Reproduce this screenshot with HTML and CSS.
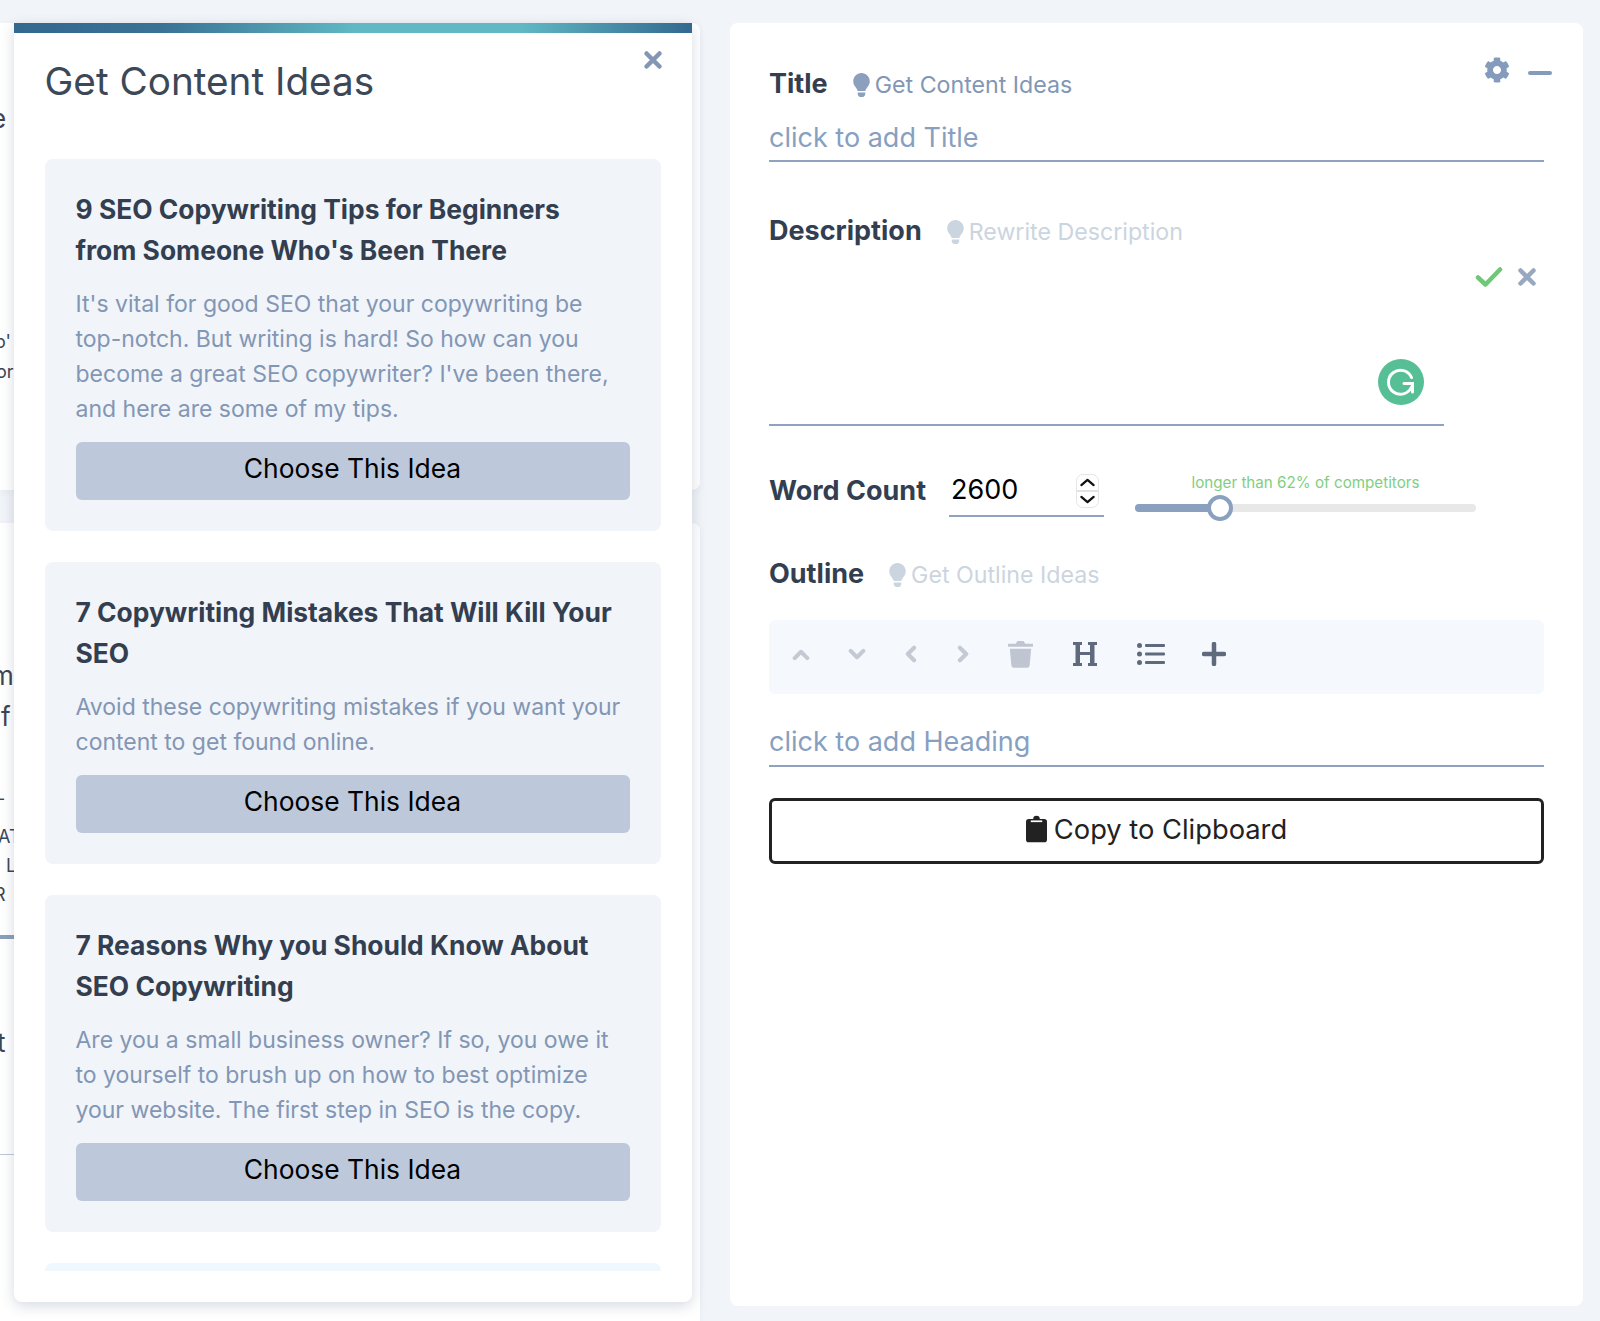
FILE: index.html
```html
<!DOCTYPE html>
<html lang="en">
<head>
<meta charset="utf-8">
<title>Get Content Ideas</title>
<link rel="stylesheet" href="styles.css">
</head>
<body>
<div class="page">
  <div class="backdrop">
    <div class="back-panel back-top">
      <div class="frag f1">e</div>
      <div class="frag f2">o'</div>
      <div class="frag f3">or</div>
    </div>
    <div class="back-panel back-bottom">
      <div class="frag f4">m</div>
      <div class="frag f5">f</div>
      <div class="frag f6 small">-</div>
      <div class="frag f7 small">AT</div>
      <div class="frag f8 small">&nbsp;L</div>
      <div class="frag f9 small">R</div>
      <div class="back-bar"></div>
      <div class="frag f10">t</div>
      <div class="back-rule"></div>
    </div>
  </div>

  <section class="modal">
    <div class="modal-bar"></div>
    <button class="modal-close" aria-label="Close">
      <svg viewBox="0 0 20 20" class="x-icon"><path d="M3.5 3.5l13 13M16.500 3.500l-13 13"/></svg>
    </button>
    <h1 class="modal-title">Get Content Ideas</h1>
    <div class="idea-list">
      <article class="idea">
        <h2 class="idea-title">9 SEO Copywriting Tips for Beginners from Someone Who's Been There</h2>
        <p class="idea-text">It's vital for good SEO that your copywriting be top-notch. But writing is hard! So how can you become a great SEO copywriter? I've been there, and here are some of my tips.</p>
        <button class="idea-btn">Choose This Idea</button>
      </article>
      <article class="idea">
        <h2 class="idea-title">7 Copywriting Mistakes That Will Kill Your SEO</h2>
        <p class="idea-text">Avoid these copywriting mistakes if you want your content to get found online.</p>
        <button class="idea-btn">Choose This Idea</button>
      </article>
      <article class="idea">
        <h2 class="idea-title">7 Reasons Why you Should Know About SEO Copywriting</h2>
        <p class="idea-text">Are you a small business owner? If so, you owe it to yourself to brush up on how to best optimize your website. The first step in SEO is the copy.</p>
        <button class="idea-btn">Choose This Idea</button>
      </article>
      <article class="idea idea-next"></article>
    </div>
  </section>

  <main class="editor">
    <div class="editor-tools">
      <svg class="gear" viewBox="0 0 512 512"><path d="M487.400 315.700l-42.600-24.600c4.300-23.200 4.300-47 0-70.200l42.600-24.600c4.900-2.800 7.100-8.600 5.500-14-11.100-35.600-30-67.800-54.700-94.600-3.800-4.100-10-5.100-14.800-2.300L380.800 110c-17.900-15.400-38.500-27.300-60.800-35.100V25.800c0-5.600-3.900-10.500-9.400-11.700-36.700-8.200-74.300-7.800-109.200 0-5.500 1.200-9.400 6.100-9.400 11.700V75c-22.200 7.900-42.800 19.800-60.800 35.100L88.700 85.500c-4.900-2.800-11-1.900-14.800 2.300-24.700 26.700-43.600 58.900-54.700 94.600-1.700 5.400.6 11.200 5.500 14L67.300 221c-4.300 23.200-4.300 47 0 70.200l-42.600 24.600c-4.900 2.800-7.100 8.600-5.500 14 11.100 35.600 30 67.800 54.700 94.600 3.800 4.100 10 5.100 14.800 2.300l42.600-24.600c17.900 15.400 38.500 27.300 60.800 35.100v49.200c0 5.600 3.900 10.500 9.400 11.700 36.700 8.200 74.300 7.800 109.200 0 5.500-1.200 9.400-6.100 9.400-11.700v-49.200c22.200-7.900 42.800-19.800 60.800-35.100l42.600 24.600c4.900 2.800 11 1.900 14.800-2.300 24.700-26.700 43.600-58.900 54.700-94.600 1.500-5.500-.7-11.300-5.600-14.100zM256 336c-44.100 0-80-35.900-80-80s35.900-80 80-80 80 35.900 80 80-35.900 80-80 80z"/></svg>
      <span class="minus"></span>
    </div>

    <div class="label-row">
      <span class="label">Title</span>
      <span class="hint">
        <svg class="bulb" viewBox="0 0 352 512"><path d="M96.060 454.350c.01 6.290 1.870 12.450 5.370 17.690l17.090 25.690a31.990 31.990 0 0 0 26.640 14.280h61.710a31.990 31.990 0 0 0 26.640-14.280l17.090-25.690a31.950 31.950 0 0 0 5.360-17.690l.04-38.350H96.010l.05 38.350zM0 176c0 44.370 16.450 84.850 43.560 115.780 16.520 18.850 42.360 58.230 52.210 91.450.04.260.11.520.15.780h160.160c.04-.26.110-.51.150-.78 9.850-33.220 35.690-72.600 52.210-91.450C335.550 260.850 352 220.370 352 176 352 78.610 272.900-.3 175.450 0 73.440.31 0 82.970 0 176z"/></svg>
        Get Content Ideas
      </span>
    </div>
    <div class="field field-title">click to add Title</div>

    <div class="label-row row-desc">
      <span class="label">Description</span>
      <span class="hint hint-off">
        <svg class="bulb" viewBox="0 0 352 512"><path d="M96.060 454.350c.01 6.290 1.870 12.450 5.370 17.690l17.090 25.690a31.990 31.990 0 0 0 26.640 14.280h61.710a31.990 31.990 0 0 0 26.640-14.280l17.090-25.690a31.950 31.950 0 0 0 5.360-17.690l.04-38.350H96.010l.05 38.350zM0 176c0 44.370 16.450 84.850 43.560 115.780 16.520 18.850 42.360 58.230 52.210 91.450.04.260.11.520.15.780h160.160c.04-.26.110-.51.150-.78 9.850-33.220 35.690-72.600 52.210-91.450C335.550 260.850 352 220.370 352 176 352 78.610 272.900-.3 175.450 0 73.440.31 0 82.970 0 176z"/></svg>
        Rewrite Description
      </span>
    </div>
    <div class="desc-box">
      <div class="desc-actions">
        <svg class="check" viewBox="0 0 28 22"><path d="M3 11.500l7.500 7L25 3.500"/></svg>
        <svg class="x-icon x-small" viewBox="0 0 20 20"><path d="M3.500 3.500l13 13M16.500 3.500l-13 13"/></svg>
      </div>
      <div class="desc-input">
        <svg class="grammarly" viewBox="0 0 46 46">
          <circle cx="23" cy="23" r="23"/>
          <path d="M33.500 18.500A12 12 0 1 0 33.500 28M26 24.500h8.500V33"/>
        </svg>
      </div>
    </div>

    <div class="count-row">
      <span class="label">Word Count</span>
      <div class="count-input">
        <span class="count-value">2600</span>
        <span class="spinner">
          <svg viewBox="0 0 12 8"><path d="M2.500 5.500L6 2.500l3.500 3"/></svg>
          <svg viewBox="0 0 12 8"><path d="M2.500 2.500L6 5.500l3.500-3"/></svg>
        </span>
      </div>
      <div class="slider">
        <div class="slider-note">longer than 62% of competitors</div>
        <div class="slider-track">
          <div class="slider-fill"></div>
          <div class="slider-thumb"></div>
        </div>
      </div>
    </div>

    <div class="label-row row-outline">
      <span class="label">Outline</span>
      <span class="hint hint-off">
        <svg class="bulb" viewBox="0 0 352 512"><path d="M96.060 454.350c.01 6.290 1.870 12.450 5.370 17.690l17.090 25.690a31.990 31.990 0 0 0 26.640 14.280h61.710a31.990 31.990 0 0 0 26.640-14.280l17.090-25.690a31.950 31.950 0 0 0 5.360-17.690l.04-38.350H96.010l.05 38.350zM0 176c0 44.370 16.450 84.850 43.560 115.780 16.520 18.850 42.360 58.230 52.210 91.450.04.260.11.520.15.780h160.160c.04-.26.110-.51.150-.78 9.850-33.220 35.690-72.600 52.210-91.450C335.550 260.850 352 220.370 352 176 352 78.610 272.900-.3 175.450 0 73.440.31 0 82.970 0 176z"/></svg>
        Get Outline Ideas
      </span>
    </div>

    <div class="toolbar">
      <svg class="tool t-up" viewBox="0 0 20 14"><path d="M3 11l7-7 7 7"/></svg>
      <svg class="tool t-down" viewBox="0 0 20 14"><path d="M3 3l7 7 7-7"/></svg>
      <svg class="tool t-left" viewBox="0 0 14 20"><path d="M11 3l-7 7 7 7"/></svg>
      <svg class="tool t-right" viewBox="0 0 14 20"><path d="M3 3l7 7-7 7"/></svg>
      <svg class="trash" viewBox="0 0 24 27"><path d="M0 3.500h7.500L9 1h6l1.500 2.500H24V6.500H0zM1.700 8.500h20.600L20.800 24.500a2.500 2.500 0 0 1-2.500 2.300H5.700a2.500 2.500 0 0 1-2.500-2.300z"/></svg>
      <svg class="heading-icon" viewBox="0 0 26 26"><path d="M1 1h9v3H8v7h10V4h-2V1h9v3h-2.500v18H25v3h-9v-3h2v-8H8v8h2v3H1v-3h2.500V4H1z"/></svg>
      <svg class="list-icon" viewBox="0 0 28 24"><circle cx="2.500" cy="3.500" r="2.500"/><circle cx="2.500" cy="12" r="2.500"/><circle cx="2.500" cy="20.500" r="2.500"/><rect x="8" y="2" width="20" height="3" rx="1"/><rect x="8" y="10.500" width="20" height="3" rx="1"/><rect x="8" y="19" width="20" height="3" rx="1"/></svg>
      <svg class="plus-icon" viewBox="0 0 24 24"><path d="M12 2v20M2 12h20"/></svg>
    </div>

    <div class="field field-heading">click to add Heading</div>

    <button class="copy-btn">
      <svg class="clip" viewBox="0 0 22 28"><path d="M3 3.500h4.500a3.500 3.500 0 0 1 7 0H19a3 3 0 0 1 3 3V25a3 3 0 0 1-3 3H3a3 3 0 0 1-3-3V6.500a3 3 0 0 1 3-3z"/><rect x="5" y="5" width="12" height="1.800" fill="#fff"/></svg>
      Copy to Clipboard
    </button>
  </main>
</div>
</body>
</html>
```

FILE: styles.css
```css
* { box-sizing: border-box; }
html, body { margin: 0; padding: 0; }
body {
  background: #f1f4f8;
  font-family: Inter, "Noto Sans", sans-serif;
  color: #2d3748;
  height: 1321px;
  overflow: hidden;
}
button { font-family: inherit; cursor: pointer; }
.page {
  position: relative;
  display: flex;
  gap: 30px;
  height: 1321px;
  padding-top: 23px;
}

/* page behind the modal */
.backdrop {
  width: 700px;
  display: flex;
  flex-direction: column;
  gap: 33px;
  flex: none;
}
.back-panel {
  background: #fff;
  overflow: hidden;
  box-shadow: 0 2px 6px rgba(60, 80, 110, .05);
}
.back-top { height: 467px; border-radius: 0 8px 8px 0; }
.back-bottom { flex: 1; border-radius: 0 8px 0 0; }
.frag {
  width: 14px;
  overflow: hidden;
  white-space: nowrap;
  font-size: 26px;
  line-height: 30px;
  color: #3c4655;
  text-indent: -9px;
}
.frag.small { font-size: 18px; line-height: 20px; }
.f1 { margin-top: 81px; }
.f2 { margin-top: 198px; font-size: 18px; line-height: 20px; text-indent: -5px; }
.f3 { margin-top: 10px; font-size: 18px; line-height: 20px; text-indent: -4px; }
.f4 { margin-top: 138px; text-indent: -9px; }
.f5 { margin-top: 11px; text-indent: 1px; }
.f6 { margin-top: 57px; text-indent: -3px; }
.f7 { margin-top: 18px; text-indent: -2px; }
.f8 { margin-top: 9px; text-indent: 1px; }
.f9 { margin-top: 9px; text-indent: -6px; }
.back-bar { width: 14px; height: 4px; margin-top: 30px; background: #8a9fbd; }
.f10 { margin-top: 89px; text-indent: -3px; }
.back-rule { width: 14px; height: 1px; margin-top: 96px; background: #bcc8da; }

/* modal */
.modal {
  position: absolute;
  left: 14px;
  top: 23px;
  width: 678px;
  height: 1279px;
  background: #fff;
  border-radius: 0 0 8px 8px;
  box-shadow: 0 4px 14px rgba(50, 70, 100, .2);
  padding: 0 31.500px 0 30.500px;
}
.modal-bar {
  position: absolute;
  left: 0;
  right: 0;
  top: 0;
  height: 10px;
  background: linear-gradient(90deg, #33688f 0%, #3a7295 22%, #5fb8c3 50%, #5fb8c3 75%, #33688f 100%);
}
.modal-close {
  position: absolute;
  right: 29px;
  top: 27px;
  width: 20px;
  height: 20px;
  padding: 0;
  border: 0;
  background: none;
}
.x-icon { display: block; width: 20px; height: 20px; fill: none; stroke: #8296b5; stroke-width: 4.500; stroke-linecap: round; }
.modal-title {
  margin: 0;
  padding-top: 35px;
  height: 136px;
  font-size: 38.700px;
  line-height: 46px;
  font-weight: 400;
  color: #3c4858;
}
.idea-list {
  height: 1112px;
  overflow: hidden;
  display: flex;
  flex-direction: column;
  gap: 31px;
}
.idea {
  flex: none;
  background: #f1f4f8;
  border-radius: 8px;
  padding: 30px 31px 31px;
}
.idea-next { background: #eff8fe; height: 60px; }
.idea-title {
  margin: 0 0 16px;
  padding-right: 10px;
  font-size: 26.400px;
  line-height: 41px;
  font-weight: 700;
  color: #333f50;
}
.idea-text {
  margin: 0 0 15px;
  font-size: 23px;
  line-height: 35px;
  color: #8296b5;
}
.idea-btn {
  display: block;
  width: 100%;
  height: 58px;
  padding: 0 0 6px;
  border: 0;
  border-radius: 6px;
  background: #bdc9da;
  color: #000;
  font-size: 26.400px;
}

/* editor */
.editor {
  position: relative;
  width: 853px;
  height: 1283px;
  flex: none;
  background: #fff;
  border-radius: 8px;
  padding: 44px 39px 0 39px;
}
.editor-tools {
  position: absolute;
  right: 31px;
  top: 34px;
  display: flex;
  align-items: center;
  gap: 18px;
}
.gear { width: 26px; height: 26px; fill: #849bbc; }
.minus { width: 24px; height: 4px; border-radius: 2px; background: #849bbc; margin-top: 5px; }
.label-row { display: flex; align-items: center; gap: 26px; height: 34px; }
.row-desc { margin-top: 52px; }
.row-outline { margin-top: 40px; }
.label { font-size: 27px; line-height: 34px; font-weight: 700; color: #333f50; }
.hint { display: flex; align-items: center; gap: 5px; font-size: 23.200px; color: #8296b5; padding-top: 2px; margin-left: -1px; }
.hint-off { color: #cbd5e0; }
.bulb { width: 17px; height: 24px; fill: #8c9fbd; }
.hint-off .bulb { fill: #cbd5e0; }
.field {
  height: 52px;
  margin-top: 9px;
  padding-top: 7px;
  border-bottom: 2px solid #8fa3c0;
  font-size: 27px;
  line-height: 40px;
  color: #87a0c0;
}
.field-title { padding-top: 8px; }
.desc-box { height: 178px; position: relative; }
.desc-actions { position: absolute; right: 7px; top: 18px; display: flex; align-items: center; gap: 14px; }
.check { width: 28px; height: 22px; fill: none; stroke: #70c778; stroke-width: 4.500; stroke-linecap: round; stroke-linejoin: round; }
.x-small { width: 20px; height: 20px; stroke: #98a8c0; }
.desc-input {
  position: absolute;
  left: 0;
  bottom: 0;
  width: 675px;
  height: 178px;
  border-bottom: 2px solid #8fa3c0;
}
.grammarly { position: absolute; left: 609px; top: 111px; width: 46px; height: 46px; fill: #57bf96; }
.grammarly path { fill: none; stroke: #fff; stroke-width: 3; stroke-linecap: round; }
.count-row { display: flex; align-items: flex-start; margin-top: 35px; }
.count-row .label { padding-top: 13px; width: 180px; flex: none; }
.count-input {
  width: 155px;
  height: 56px;
  flex: none;
  padding: 12px 5px 0 2px;
  display: flex;
  align-items: flex-start;
  justify-content: space-between;
  border-bottom: 2px solid #8fa3c0;
}
.count-value { font-size: 27px; line-height: 34px; color: #000; }
.spinner {
  width: 23px;
  height: 34px;
  margin-top: 1px;
  display: flex;
  flex-direction: column;
  border-radius: 7px;
  border: 1px solid #e6e6e6;
  background: #fff;
  overflow: hidden;
}
.spinner svg { flex: 1; width: 100%; min-height: 0; fill: none; stroke: #111; stroke-width: 1.300; stroke-linecap: round; stroke-linejoin: round; }
.spinner svg + svg { border-top: 2px solid #e2e2e2; }
.slider { width: 341px; margin: 12px 0 0 31px; }
.slider-note { font-size: 15.200px; line-height: 20px; text-align: center; color: #7fcf82; padding: 0 0 11px 0; }
.slider-track { position: relative; height: 8px; border-radius: 4px; background: #e8e8e8; }
.slider-fill { width: 85px; height: 8px; border-radius: 4px 0 0 4px; background: #8aa0bf; }
.slider-thumb {
  position: absolute;
  left: 72px;
  top: -9px;
  width: 26px;
  height: 26px;
  border-radius: 50%;
  border: 4px solid #8aa0bf;
  background: #fff;
}
.toolbar {
  position: relative;
  display: flex;
  align-items: center;
  height: 74px;
  margin-top: 29px;
  padding: 0 0 6px 23px;
  background: #f5f8fc;
  border-radius: 6px;
}
.tool { fill: none; stroke: #c4cad3; stroke-width: 4.500; stroke-linecap: round; stroke-linejoin: round; flex: none; }
.t-up, .t-down { width: 18px; height: 13px; }
.t-down { margin-left: 38px; }
.t-left, .t-right { width: 13px; height: 18px; }
.t-left { margin-left: 38px; }
.t-right { margin-left: 40px; }
.trash { width: 25px; height: 28px; margin-left: 38px; fill: #bfc6d1; flex: none; }
.heading-icon { width: 26px; height: 26px; margin-left: 39px; fill: #5f6b7c; flex: none; }
.list-icon { width: 28px; height: 24px; margin-left: 39px; fill: #5f6b7c; flex: none; }
.plus-icon { width: 24px; height: 24px; margin-left: 37px; fill: none; stroke: #5f6b7c; stroke-width: 4.500; stroke-linecap: round; flex: none; }
.field-heading { margin-top: 21px; }
.copy-btn {
  display: flex;
  align-items: center;
  justify-content: center;
  gap: 7px;
  width: 100%;
  height: 66px;
  margin-top: 31px;
  padding: 0 0 4px;
  border: 3px solid #222;
  border-radius: 6px;
  background: #fff;
  color: #222;
  font-size: 27.300px;
}
.clip { width: 21px; height: 28px; fill: #222; }
```
